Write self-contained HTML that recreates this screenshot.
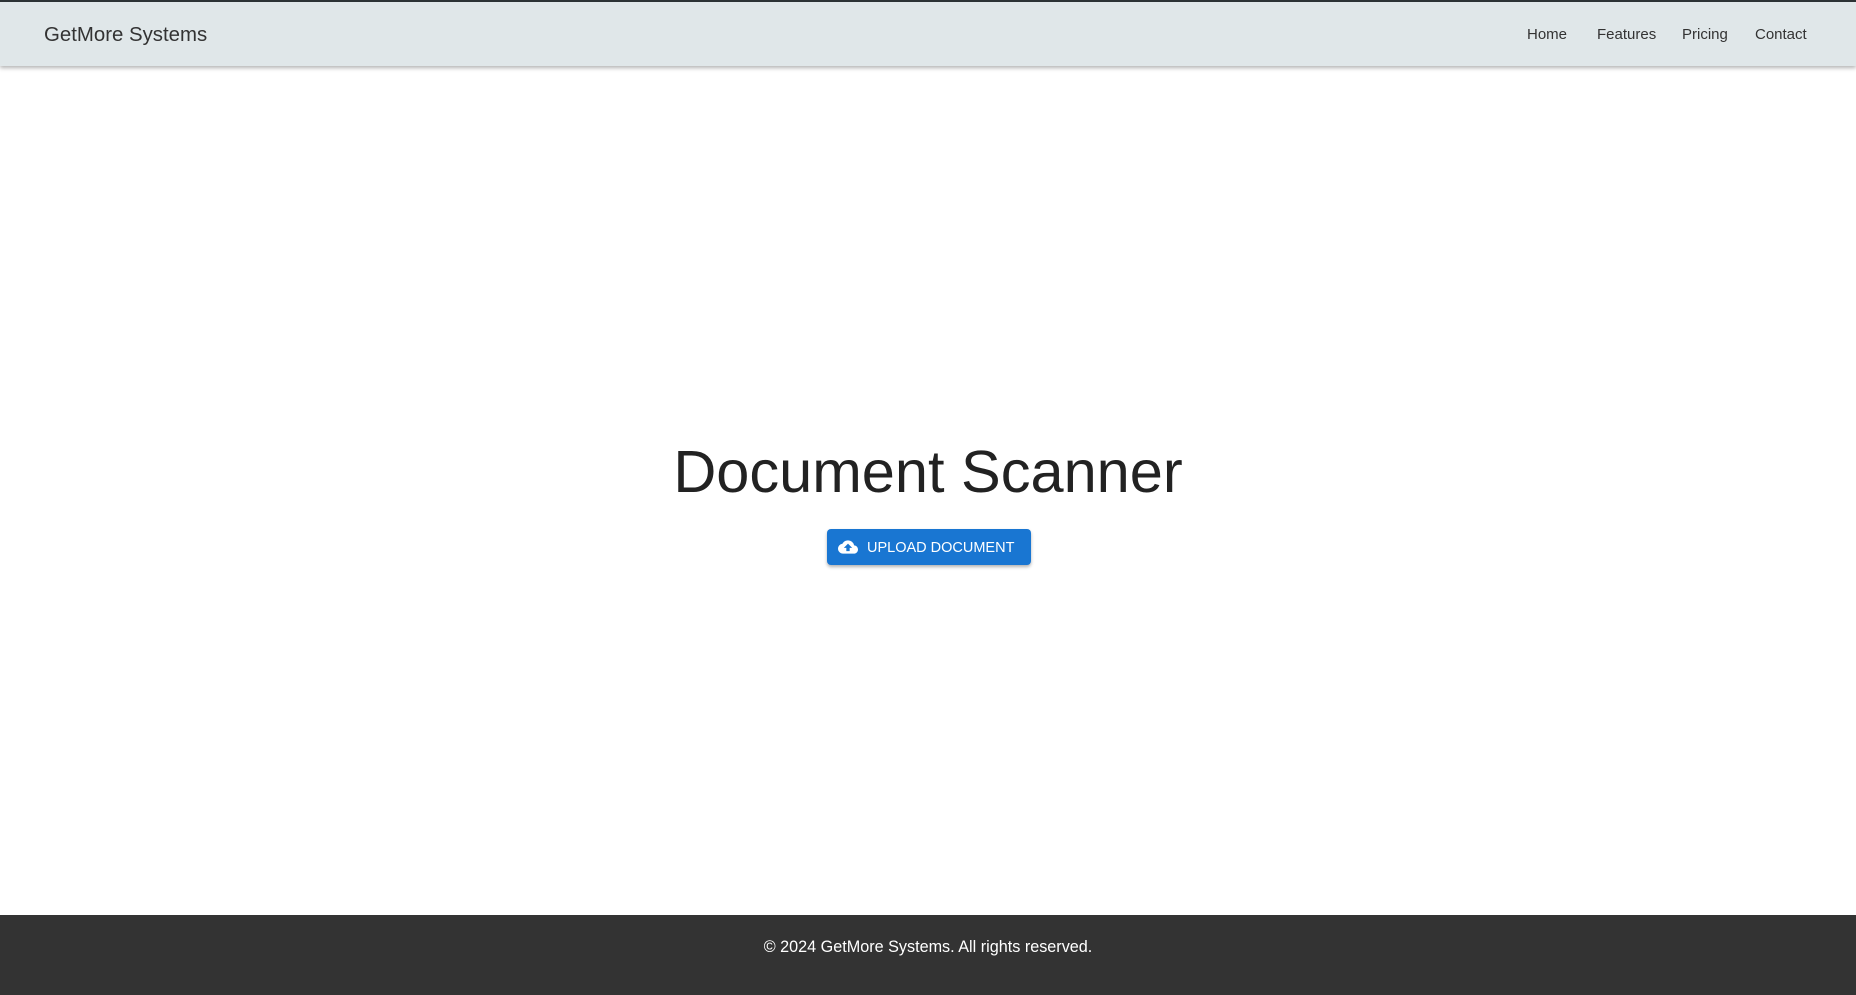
<!DOCTYPE html>
<html><head><meta charset="utf-8"><style>
*{margin:0;padding:0;box-sizing:border-box}
html,body{width:1856px;height:995px;overflow:hidden;background:#fff;font-family:"Liberation Sans",Arial,sans-serif}
.top{position:absolute;left:0;top:0;width:1856px;height:2px;background:#2d3436}
header{position:absolute;left:0;top:2px;width:1856px;height:64px;background:#e0e7e9;box-shadow:0 2px 4px rgba(0,0,0,.3)}
.brand{position:absolute;left:44px;top:21px;font-size:20.4px;color:#333;line-height:24px}
.nav a{position:absolute;top:24px;font-size:15px;color:#333;text-decoration:none;line-height:18px}
h1{position:absolute;left:0;width:1856px;text-align:center;top:440px;font-size:59.5px;font-weight:400;color:#222;line-height:64px}
.btn{position:absolute;left:827px;top:529px;width:204px;height:36px;background:#1976d2;border-radius:4px;box-shadow:0 2px 3px rgba(0,0,0,.3);color:#fff;font-size:14.5px;line-height:38px}
.btn svg{position:absolute;left:11px;top:8px}
.btn span{position:absolute;left:40px;top:0}
footer{position:absolute;left:0;top:915px;width:1856px;height:80px;background:#333;color:#fff;text-align:center;font-size:16.2px;line-height:20px;padding-top:22px}
</style></head><body>
<div class="top"></div>
<header><div class="brand">GetMore Systems</div>
<div class="nav"><a style="left:1527px">Home</a><a style="left:1597px">Features</a><a style="left:1682px">Pricing</a><a style="left:1755px">Contact</a></div></header>
<h1>Document Scanner</h1>
<div class="btn"><svg width="20" height="20" viewBox="0 0 24 24"><path fill="#fff" d="M19.35 10.04A7.49 7.49 0 0 0 12 4C9.11 4 6.6 5.64 5.35 8.04A5.994 5.994 0 0 0 0 14c0 3.31 2.69 6 6 6h13c2.76 0 5-2.240 5-5 0-2.64-2.05-4.78-4.65-4.96zM14 13v4h-4v-4H7l5-5 5 5h-3z"/></svg><span>UPLOAD DOCUMENT</span></div>
<footer>© 2024 GetMore Systems. All rights reserved.</footer>
</body></html>
